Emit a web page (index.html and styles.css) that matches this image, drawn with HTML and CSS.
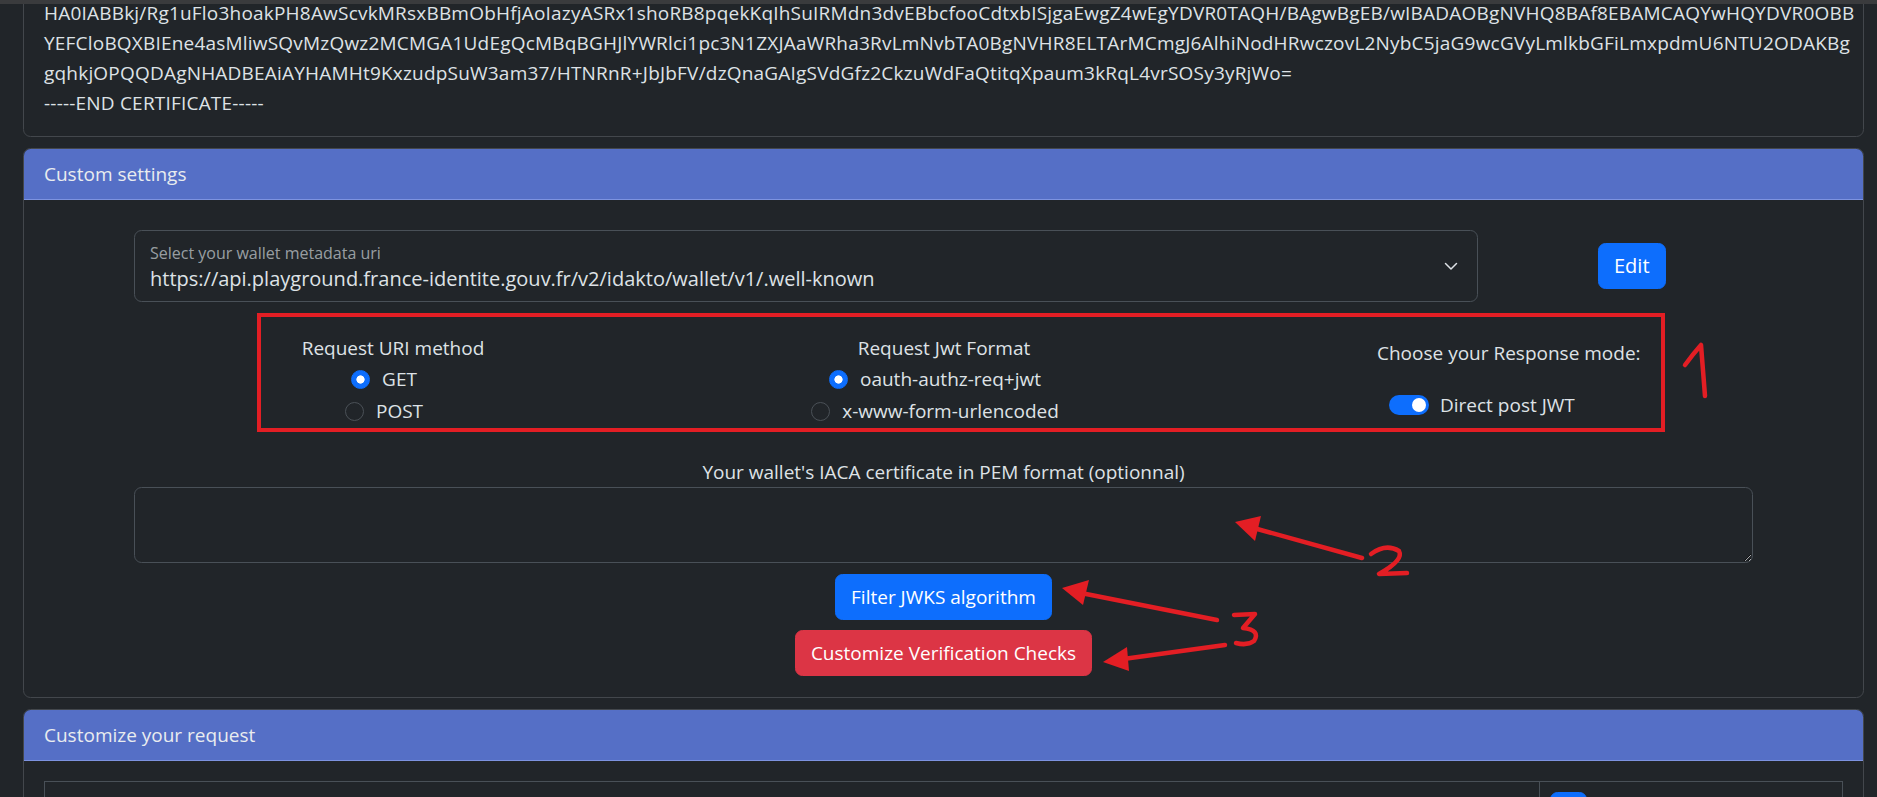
FILE: index.html
```html
<!DOCTYPE html>
<html lang="en">
<head>
<meta charset="utf-8">
<title>Custom settings</title>
<link rel="stylesheet" href="styles.css">
</head>
<body>
<div class="chrome-top"></div>
<main class="page">
  <section class="card cert-card">
    <div class="cert-body">
      <div class="cert-line">HA0IABBkj/Rg1uFlo3hoakPH8AwScvkMRsxBBmObHfjAoIazyASRx1shoRB8pqekKqIhSuIRMdn3dvEBbcfooCdtxbISjgaEwgZ4wEgYDVR0TAQH/BAgwBgEB/wIBADAOBgNVHQ8BAf8EBAMCAQYwHQYDVR0OBB</div>
      <div class="cert-line">YEFCloBQXBIEne4asMliwSQvMzQwz2MCMGA1UdEgQcMBqBGHJlYWRlci1pc3N1ZXJAaWRha3RvLmNvbTA0BgNVHR8ELTArMCmgJ6AlhiNodHRwczovL2NybC5jaG9wcGVyLmlkbGFiLmxpdmU6NTU2ODAKBg</div>
      <div class="cert-line">gqhkjOPQQDAgNHADBEAiAYHAMHt9KxzudpSuW3am37/HTNRnR+JbJbFV/dzQnaGAIgSVdGfz2CkzuWdFaQtitqXpaum3kRqL4vrSOSy3yRjWo=</div>
      <div class="cert-line">-----END CERTIFICATE-----</div>
    </div>
  </section>

  <section class="card">
    <header class="card-header">Custom settings</header>
    <div class="settings-body">
      <div class="settings-inner">
        <div class="uri-row">
          <div class="floating-select">
            <div class="select-text">
              <span class="floating-label">Select your wallet metadata uri</span>
              <span class="select-value">https://api.playground.france-identite.gouv.fr/v2/idakto/wallet/v1/.well-known</span>
            </div>
            <svg class="chevron" width="16" height="16" viewBox="0 0 16 16"><path d="M2.5 5.5l5.5 5.5 5.5-5.5" fill="none" stroke="#dee2e6" stroke-width="1.5" stroke-linecap="round" stroke-linejoin="round"/></svg>
          </div>
          <button class="btn btn-primary btn-edit">Edit</button>
        </div>

        <div class="options-box">
          <div class="opt-col">
            <div class="opt-title">Request URI method</div>
            <label class="radio-row"><span class="radio checked"></span><span>GET</span></label>
            <label class="radio-row"><span class="radio"></span><span>POST</span></label>
          </div>
          <div class="opt-col">
            <div class="opt-title">Request Jwt Format</div>
            <label class="radio-row"><span class="radio checked"></span><span>oauth-authz-req+jwt</span></label>
            <label class="radio-row"><span class="radio"></span><span>x-www-form-urlencoded</span></label>
          </div>
          <div class="opt-col opt-col-left">
            <div class="opt-title opt-title-low">Choose your Response mode:</div>
            <label class="switch-row"><span class="switch"></span><span>Direct post JWT</span></label>
          </div>
        </div>

        <label class="pem-label" for="pem">Your wallet's IACA certificate in PEM format (optionnal)</label>
        <textarea id="pem" class="pem-input"></textarea>

        <div class="actions">
          <button class="btn btn-primary">Filter JWKS algorithm</button>
          <button class="btn btn-danger">Customize Verification Checks</button>
        </div>
      </div>
    </div>
  </section>

  <section class="card">
    <header class="card-header">Customize your request</header>
    <div class="request-body">
      <div class="request-table">
        <div class="req-main"></div>
        <div class="req-side"><button class="btn btn-primary btn-small"></button></div>
      </div>
    </div>
  </section>
</main>

<svg class="annotations" width="1877" height="797" viewBox="0 0 1877 797">
  <g fill="none" stroke="#e31e24" stroke-width="4.5" stroke-linecap="round" stroke-linejoin="round">
    <path d="M1685 365 Q1693 354 1701 345 L1705 396"/>
    <path d="M1371 554 Q1386 543 1399 551 Q1404 560 1379 574 L1407 573"/>
    <path d="M1362 558 L1250 527"/>
    <path d="M1234 615 L1255 614 L1243 628 Q1261 630 1254 641 Q1247 646 1236 643"/>
    <path d="M1217 620 L1076 592"/>
    <path d="M1225 645 L1116 660"/>
  </g>
  <g fill="#e31e24">
    <polygon points="1235,522 1261,516 1255,541"/>
    <polygon points="1062,588 1089,580 1083,605"/>
    <polygon points="1103,662 1127,647 1129,671"/>
  </g>
</svg>
</body>
</html>
```

FILE: styles.css
```css
* { box-sizing: border-box; }

html, body {
  margin: 0;
  padding: 0;
}

body {
  background: #212529;
  color: #dee2e6;
  font-family: "Open Sans", "Noto Sans", sans-serif;
  font-size: 19px;
  line-height: 30px;
  overflow: hidden;
  height: 797px;
  position: relative;
}

.chrome-top {
  position: fixed;
  top: 0;
  left: 0;
  right: 0;
  height: 4px;
  background: #3a3b3d;
  z-index: 5;
}

.page {
  padding: 0 13px 0 23px;
}

.card {
  border: 1px solid #43474c;
  border-radius: 7.5px;
  margin-bottom: 11px;
  background: #212529;
}

.cert-card {
  margin-top: -23px;
  overflow: hidden;
}

.cert-body {
  padding: 20px 20px 18px;
}

.cert-line {
  white-space: nowrap;
  letter-spacing: 0.2px;
}

.card-header {
  background: #556fc6;
  color: #e9ecef;
  padding: 10px 20px;
  border-bottom: 1px solid #7d93e0;
  border-radius: 6.5px 6.5px 0 0;
}

.settings-body {
  padding: 20px 20px 21px;
}

.settings-inner {
  width: 1619px;
  margin: 0 auto;
}

.uri-row {
  margin-top: 10px;
  display: flex;
  align-items: center;
}

.floating-select {
  flex: 0 0 1344px;
  height: 72px;
  border: 1px solid #495057;
  border-radius: 7.5px;
  display: flex;
  align-items: center;
  padding: 0 18px 0 15px;
}

.select-text {
  flex: 1;
  display: flex;
  flex-direction: column;
  padding-top: 1px;
}

.floating-label {
  font-size: 16px;
  line-height: 20px;
  color: rgba(222, 226, 230, 0.65);
  margin-bottom: 3px;
}

.select-value {
  font-size: 20px;
  line-height: 25px;
  color: #dee2e6;
}

.chevron {
  flex: 0 0 16px;
}

.btn {
  font-family: inherit;
  font-size: 19px;
  line-height: 30px;
  padding: 7px 15px;
  border-radius: 7.5px;
  border: 1px solid transparent;
  color: #fff;
  cursor: pointer;
}

.btn-primary {
  background: #0d6efd;
  border-color: #0d6efd;
}

.btn-danger {
  background: #dc3545;
  border-color: #dc3545;
}

.btn-edit {
  margin-left: 120px;
  padding: 7px 15px;
  font-size: 20px;
}

.options-box {
  margin-top: 11px;
  margin-left: 123px;
  width: 1408px;
  border: 4px solid #e31e24;
  display: grid;
  grid-template-columns: 264px 838px 292px;
  padding: 16px 6px 1px 0;
}

.opt-col {
  display: flex;
  flex-direction: column;
  align-items: center;
}

.opt-col-left {
  align-items: flex-start;
  padding-left: 14px;
}

.opt-title {
  line-height: 30px;
  white-space: nowrap;
}

.opt-title-low {
  margin-top: 5px;
}

.radio-row {
  height: 32px;
  display: flex;
  align-items: center;
  gap: 12px;
  padding-right: 18px;
  white-space: nowrap;
}

.radio {
  width: 19px;
  height: 19px;
  border-radius: 50%;
  border: 1px solid #4b5157;
  background: #212529;
  flex: 0 0 19px;
}

.radio.checked {
  border-color: #0d6efd;
  background: radial-gradient(circle, #fff 0 3.8px, #0d6efd 4.4px);
}

.switch-row {
  margin-top: 22px;
  margin-left: 12px;
  height: 30px;
  display: flex;
  align-items: center;
  gap: 11px;
  white-space: nowrap;
}

.switch {
  width: 40px;
  height: 20px;
  border-radius: 10px;
  background: #0d6efd;
  display: flex;
  align-items: center;
  justify-content: flex-end;
  padding-right: 3px;
}

.switch::after {
  content: "";
  width: 14px;
  height: 14px;
  border-radius: 50%;
  background: #fff;
}

.pem-label {
  display: block;
  margin-top: 25px;
  text-align: center;
  line-height: 30px;
}

.pem-input {
  display: block;
  width: 100%;
  height: 76px;
  margin: 0;
  background: #212529;
  border: 1px solid #495057;
  border-radius: 7.5px;
  color: #dee2e6;
  color-scheme: dark;
  font-family: inherit;
  font-size: 19px;
}

.actions {
  margin-top: 11px;
  display: flex;
  flex-direction: column;
  align-items: center;
  gap: 10px;
}

.request-body {
  padding: 20px;
}

.request-table {
  display: flex;
  border: 1px solid #495057;
  height: 120px;
}

.req-main {
  flex: 1;
}

.req-side {
  flex: 0 0 303px;
  border-left: 1px solid #495057;
  padding: 10px;
}

.btn-small {
  width: 37px;
  height: 40px;
  padding: 0;
}

.annotations {
  position: absolute;
  top: 0;
  left: 0;
  pointer-events: none;
  z-index: 4;
}
```
